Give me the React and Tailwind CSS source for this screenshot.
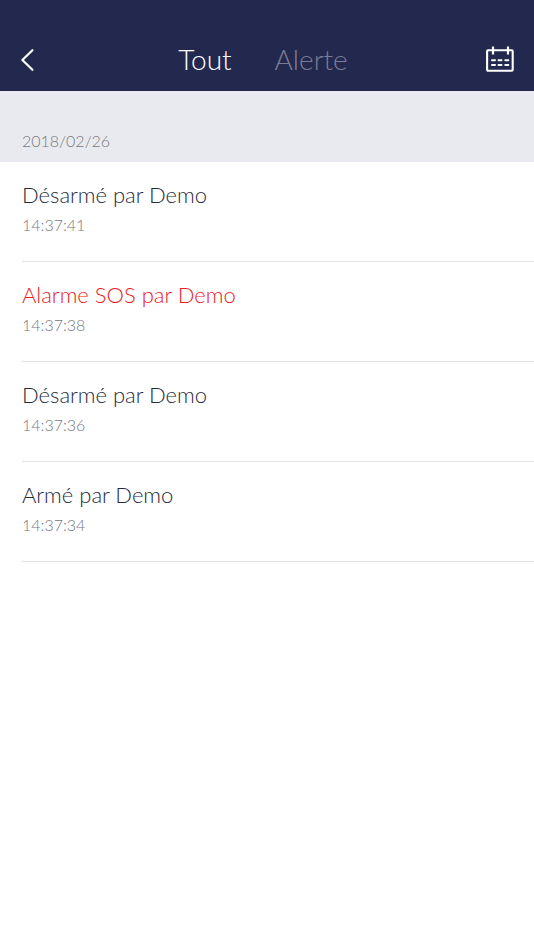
import React, { useState } from 'react';

const DATE = '2018/02/26';

const EVENTS = [
  { id: 1, label: 'Désarmé par Demo', time: '14:37:41', alert: false },
  { id: 2, label: 'Alarme SOS par Demo', time: '14:37:38', alert: true },
  { id: 3, label: 'Désarmé par Demo', time: '14:37:36', alert: false },
  { id: 4, label: 'Armé par Demo', time: '14:37:34', alert: false },
];

const TABS = [
  { id: 'all', label: 'Tout' },
  { id: 'alert', label: 'Alerte' },
];

function BackIcon() {
  return (
    <svg className="w-4 h-6" fill="none" viewBox="0 0 16 24" stroke="currentColor">
      <path strokeLinecap="round" strokeLinejoin="round" strokeWidth={2.2} d="M12.4 3.2L2.4 13l10 9.8" />
    </svg>
  );
}

function CalendarIcon() {
  return (
    <svg className="w-7 h-7" fill="none" viewBox="0 0 28 28" stroke="currentColor">
      <rect x="1.1" y="5.2" width="25.6" height="20.6" rx="1" strokeWidth={2.1} />
      <path strokeWidth={2.2} d="M7 1.6v8M22 1.6v8" />
      <path strokeLinecap="round" strokeWidth={2} d="M6 15.2h3M12.5 15.2h3M19.3 15.2h3M6 20h3M12.5 20h3M19.3 20h3" />
    </svg>
  );
}

export default function App() {
  const [activeTab, setActiveTab] = useState('all');

  const events = activeTab === 'alert' ? EVENTS.filter((event) => event.alert) : EVENTS;

  return (
    <div className="min-h-screen bg-white font-['Lato',sans-serif] font-light">
      {/* Header */}
      <header className="flex items-center justify-between bg-[#23284f] px-5 pt-[26px] h-[91px] text-white">
        <button type="button" aria-label="Retour" className="flex w-5">
          <BackIcon />
        </button>
        <nav className="flex gap-[43px] text-[28px] leading-9">
          {TABS.map((tab) => (
            <button
              key={tab.id}
              type="button"
              onClick={() => setActiveTab(tab.id)}
              className={activeTab === tab.id ? 'text-white' : 'text-[#7a7e95]'}
            >
              {tab.label}
            </button>
          ))}
        </nav>
        <button type="button" aria-label="Calendrier" className="flex">
          <CalendarIcon />
        </button>
      </header>

      {/* Event log */}
      <main>
        <h2 className="bg-[#e9eaef] px-[22px] pt-9 pb-2 text-base leading-[27px] text-[#77787e]">{DATE}</h2>
        <ul className="pl-[22px]">
          {events.map((event) => (
            <li key={event.id} className="border-b border-[#e2e3e5] pt-[17px] pb-[22px]">
              <p className={`text-[22px] leading-8 ${event.alert ? 'text-[#ea1c22]' : 'text-[#262b3c]'}`}>
                {event.label}
              </p>
              <p className="text-base leading-7 text-[#767882]">{event.time}</p>
            </li>
          ))}
        </ul>
      </main>
    </div>
  );
}
